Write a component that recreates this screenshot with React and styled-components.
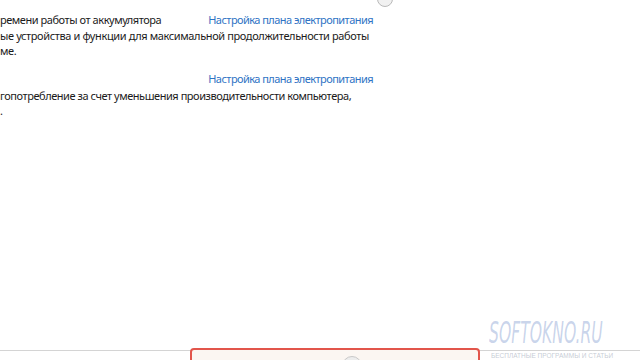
import React from "react";
import styled, { createGlobalStyle } from "styled-components";

const GlobalStyle = createGlobalStyle`
  html, body {
    margin: 0;
    padding: 0;
    background: #ffffff;
    overflow: hidden;
  }
  body {
    width: 640px;
    height: 360px;
    font-family: "Noto Sans", "Open Sans", sans-serif;
  }
`;

const Page = styled.div`
  position: relative;
  width: 640px;
  height: 360px;
  display: flex;
  flex-direction: column;
  background: #fff;
`;

const Content = styled.div`
  width: 373px;
  padding-top: 12px;
  display: flex;
  flex-direction: column;
  gap: 13px;
`;

const Plan = styled.div`
  display: flex;
  flex-direction: column;
`;

const PlanHead = styled.div`
  display: flex;
  justify-content: space-between;
  align-items: baseline;
  height: 15px;
`;

const PlanName = styled.span`
  font-size: 11px;
  letter-spacing: -0.45px;
  color: #1b1b1b;
  white-space: nowrap;
`;

const Link = styled.a`
  font-size: 11px;
  letter-spacing: -0.55px;
  color: #2f73c4;
  text-decoration: none;
  white-space: nowrap;
`;

const Desc = styled.p`
  margin: 0;
  padding-top: ${(p) => p.$gap || 0}px;
  font-size: 11px;
  letter-spacing: ${(p) => p.$ls || -0.38}px;
  line-height: 15px;
  color: #1b1b1b;
  white-space: pre;
`;

const Knob = styled.div`
  position: absolute;
  left: 377px;
  top: -9px;
  width: 14px;
  height: 14px;
  border-radius: 50%;
  border: 1px solid #b9b9b9;
  background: #f1f1f1;
`;

const Spacer = styled.div`
  flex: 1;
`;

const Footer = styled.div`
  position: relative;
  height: 9px;
  border-top: 1px solid #d4d4d4;
`;

const Highlight = styled.div`
  position: absolute;
  left: 190px;
  top: -3px;
  width: 286px;
  height: 14px;
  border: 2px solid #e2554b;
  border-radius: 4px;
  background: #fbf6f2;
  overflow: hidden;
`;

const Arc = styled.div`
  position: absolute;
  left: 150px;
  top: 6px;
  width: 18px;
  height: 18px;
  border-radius: 50%;
  border: 1px solid #c8c8c8;
  background: #ededed;
`;

const Watermark = styled.div`
  position: absolute;
  left: 489px;
  top: 317px;
  width: 120px;
  display: flex;
  flex-direction: column;
  align-items: flex-start;
`;

const Brand = styled.span`
  display: block;
  font-family: "DejaVu Sans Condensed", "DejaVu Sans", sans-serif;
  font-style: italic;
  font-size: 31px;
  line-height: 31px;
  color: rgba(135, 160, 210, 0.45);
  white-space: nowrap;
  transform-origin: left top;
  transform: scaleX(0.56);
`;

const Tagline = styled.span`
  margin-top: 4px;
  font-family: "Liberation Sans", sans-serif;
  font-size: 6.5px;
  color: rgba(140, 150, 170, 0.5);
  white-space: nowrap;
  padding-left: 2px;
`;

export default function App() {
  return (
    <>
      <GlobalStyle />
      <Page>
        <Knob />
        <Content>
          <Plan>
            <PlanHead>
              <PlanName>ремени работы от аккумулятора</PlanName>
              <Link>Настройка плана электропитания</Link>
            </PlanHead>
            <Desc $gap={1}>
              {"ые устройства и функции для максимальной продолжительности работы\nме."}
            </Desc>
          </Plan>
          <Plan>
            <PlanHead>
              <PlanName />
              <Link>Настройка плана электропитания</Link>
            </PlanHead>
            <Desc $gap={2} $ls={-0.45}>
              {"гопотребление за счет уменьшения производительности компьютера,\n."}
            </Desc>
          </Plan>
        </Content>
        <Spacer />
        <Footer>
          <Highlight>
            <Arc />
          </Highlight>
        </Footer>
        <Watermark>
          <Brand>SOFTOKNO.RU</Brand>
          <Tagline>БЕСПЛАТНЫЕ ПРОГРАММЫ И СТАТЬИ</Tagline>
        </Watermark>
      </Page>
    </>
  );
}
